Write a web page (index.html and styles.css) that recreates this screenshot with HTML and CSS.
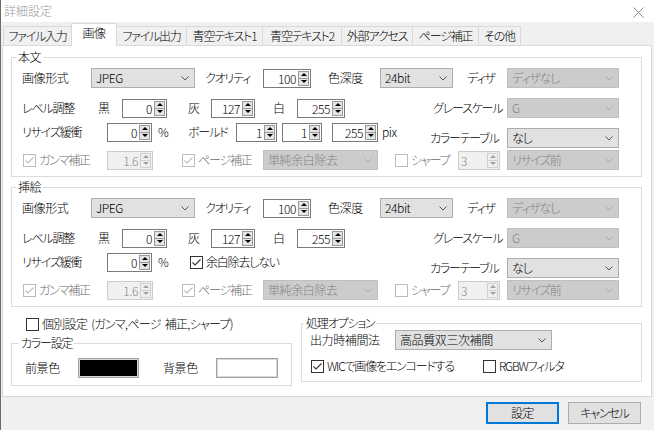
FILE: index.html
```html
<!DOCTYPE html>
<html lang="ja">
<head>
<meta charset="utf-8">
<title>詳細設定</title>
<link rel="stylesheet" href="styles.css">
</head>
<body>
<div class="window">
  <div class="titlebar">
    <span class="title">詳細設定</span>
    <svg class="close" width="11" height="11" viewBox="0 0 11 11"><path d="M0.5 0.5 L10.5 10.5 M10.5 0.5 L0.5 10.5"/></svg>
  </div>
  <div class="tabs">
    <div class="tab w68 k">ファイル入力</div>
    <div class="tab active">画像</div>
    <div class="tab w70 k">ファイル出力</div>
    <div class="tab w76 k">青空テキスト1</div>
    <div class="tab w79 k">青空テキスト2</div>
    <div class="tab w71 k">外部アクセス</div>
    <div class="tab w66 k">ページ補正</div>
    <div class="tab last k">その他</div>
  </div>
  <div class="panel">
    <div class="group main">
      <div class="gtitle">本文</div>
      <div class="row row1">
        <span class="lbl w69">画像形式</span>
        <div class="dd w104"><span>JPEG</span><svg class="chev" viewBox="0 0 8 5"><path d="M0.5 0.5 L4 4 L7.5 0.5"/></svg></div>
        <span class="lbl ml10 w58 k">クオリティ</span>
        <div class="spin w48"><span class="num">100</span><span class="arr"><i class="up"></i><i class="dn"></i></span></div>
        <span class="lbl ml17 w52">色深度</span>
        <div class="dd w73"><span>24bit</span><svg class="chev" viewBox="0 0 8 5"><path d="M0.5 0.5 L4 4 L7.5 0.5"/></svg></div>
        <span class="lbl ml14 w40 k">ディザ</span>
        <div class="dd off w112"><span class="k">ディザなし</span><svg class="chev" viewBox="0 0 8 5"><path d="M0.5 0.5 L4 4 L7.5 0.5"/></svg></div>
      </div>
      <div class="row row2">
        <span class="lbl w76 k">レベル調整</span>
        <span class="lbl w24">黒</span>
        <div class="spin w45"><span class="num">0</span><span class="arr"><i class="up"></i><i class="dn"></i></span></div>
        <span class="lbl ml21 w23">灰</span>
        <div class="spin w44"><span class="num">127</span><span class="arr"><i class="up"></i><i class="dn"></i></span></div>
        <span class="lbl ml18 w24">白</span>
        <div class="spin w48"><span class="num">255</span><span class="arr"><i class="up"></i><i class="dn"></i></span></div>
        <span class="lbl ml88 w74 k">グレースケール</span>
        <div class="dd off w112"><span>G</span><svg class="chev" viewBox="0 0 8 5"><path d="M0.5 0.5 L4 4 L7.5 0.5"/></svg></div>
      </div>
      <div class="row row3">
        <span class="lbl w85 k">リサイズ緩衝</span>
        <div class="spin w45"><span class="num">0</span><span class="arr"><i class="up"></i><i class="dn"></i></span></div>
        <span class="lbl ml6 w30">%</span>
        <span class="lbl w48 k">ボールド</span>
        <div class="spin w41"><span class="num">1</span><span class="arr"><i class="up"></i><i class="dn"></i></span></div>
        <div class="spin ml5 w40"><span class="num">1</span><span class="arr"><i class="up"></i><i class="dn"></i></span></div>
        <div class="spin ml10 w46"><span class="num">255</span><span class="arr"><i class="up"></i><i class="dn"></i></span></div>
        <span class="lbl ml4 w48">pix</span>
        <span class="lbl w77 drop k">カラーテーブル</span>
        <div class="dd w112 drop"><span class="k">なし</span><svg class="chev" viewBox="0 0 8 5"><path d="M0.5 0.5 L4 4 L7.5 0.5"/></svg></div>
      </div>
      <div class="row row4">
        <span class="chk dis ml1 w84"><svg class="box" viewBox="0 0 13 13"><rect x="0.5" y="0.5" width="12" height="12"/><path d="M2.5 6.5 L5 9 L10.5 3.5"/></svg><span class="k">ガンマ補正</span></span>
        <div class="spin off w46"><span class="num">1.6</span><span class="arr"><i class="up"></i><i class="dn"></i></span></div>
        <span class="chk dis ml29 w81"><svg class="box" viewBox="0 0 13 13"><rect x="0.5" y="0.5" width="12" height="12"/><path d="M2.5 6.5 L5 9 L10.5 3.5"/></svg><span class="k">ページ補正</span></span>
        <div class="dd off w115"><span>単純余白除去</span><svg class="chev" viewBox="0 0 8 5"><path d="M0.5 0.5 L4 4 L7.5 0.5"/></svg></div>
        <span class="chk dis ml17 w63"><svg class="box" viewBox="0 0 13 13"><rect x="0.5" y="0.5" width="12" height="12"/></svg><span class="k">シャープ</span></span>
        <div class="spin off w42 left"><span class="num">3</span><span class="arr"><i class="up"></i><i class="dn"></i></span></div>
        <div class="dd off ml7 w112"><span class="k">リサイズ前</span><svg class="chev" viewBox="0 0 8 5"><path d="M0.5 0.5 L4 4 L7.5 0.5"/></svg></div>
      </div>
    </div>

    <div class="group main second">
      <div class="gtitle">挿絵</div>
      <div class="row row1">
        <span class="lbl w69">画像形式</span>
        <div class="dd w104"><span>JPEG</span><svg class="chev" viewBox="0 0 8 5"><path d="M0.5 0.5 L4 4 L7.5 0.5"/></svg></div>
        <span class="lbl ml10 w58 k">クオリティ</span>
        <div class="spin w48"><span class="num">100</span><span class="arr"><i class="up"></i><i class="dn"></i></span></div>
        <span class="lbl ml17 w52">色深度</span>
        <div class="dd w73"><span>24bit</span><svg class="chev" viewBox="0 0 8 5"><path d="M0.5 0.5 L4 4 L7.5 0.5"/></svg></div>
        <span class="lbl ml14 w40 k">ディザ</span>
        <div class="dd off w112"><span class="k">ディザなし</span><svg class="chev" viewBox="0 0 8 5"><path d="M0.5 0.5 L4 4 L7.5 0.5"/></svg></div>
      </div>
      <div class="row row2">
        <span class="lbl w76 k">レベル調整</span>
        <span class="lbl w24">黒</span>
        <div class="spin w45"><span class="num">0</span><span class="arr"><i class="up"></i><i class="dn"></i></span></div>
        <span class="lbl ml21 w23">灰</span>
        <div class="spin w44"><span class="num">127</span><span class="arr"><i class="up"></i><i class="dn"></i></span></div>
        <span class="lbl ml18 w24">白</span>
        <div class="spin w48"><span class="num">255</span><span class="arr"><i class="up"></i><i class="dn"></i></span></div>
        <span class="lbl ml88 w74 k">グレースケール</span>
        <div class="dd off w112"><span>G</span><svg class="chev" viewBox="0 0 8 5"><path d="M0.5 0.5 L4 4 L7.5 0.5"/></svg></div>
      </div>
      <div class="row row3">
        <span class="lbl w85 k">リサイズ緩衝</span>
        <div class="spin w45"><span class="num">0</span><span class="arr"><i class="up"></i><i class="dn"></i></span></div>
        <span class="lbl ml6 w32">%</span>
        <span class="chk w240"><svg class="box" viewBox="0 0 13 13"><rect x="0.5" y="0.5" width="12" height="12"/><path d="M2.5 6.5 L5 9 L10.5 3.5"/></svg><span class="k">余白除去しない</span></span>
        <span class="lbl w77 drop k">カラーテーブル</span>
        <div class="dd w112 drop"><span class="k">なし</span><svg class="chev" viewBox="0 0 8 5"><path d="M0.5 0.5 L4 4 L7.5 0.5"/></svg></div>
      </div>
      <div class="row row4">
        <span class="chk dis ml1 w84"><svg class="box" viewBox="0 0 13 13"><rect x="0.5" y="0.5" width="12" height="12"/><path d="M2.5 6.5 L5 9 L10.5 3.5"/></svg><span class="k">ガンマ補正</span></span>
        <div class="spin off w46"><span class="num">1.6</span><span class="arr"><i class="up"></i><i class="dn"></i></span></div>
        <span class="chk dis ml29 w81"><svg class="box" viewBox="0 0 13 13"><rect x="0.5" y="0.5" width="12" height="12"/><path d="M2.5 6.5 L5 9 L10.5 3.5"/></svg><span class="k">ページ補正</span></span>
        <div class="dd off w115"><span>単純余白除去</span><svg class="chev" viewBox="0 0 8 5"><path d="M0.5 0.5 L4 4 L7.5 0.5"/></svg></div>
        <span class="chk dis ml17 w63"><svg class="box" viewBox="0 0 13 13"><rect x="0.5" y="0.5" width="12" height="12"/></svg><span class="k">シャープ</span></span>
        <div class="spin off w42 left"><span class="num">3</span><span class="arr"><i class="up"></i><i class="dn"></i></span></div>
        <div class="dd off ml7 w112"><span class="k">リサイズ前</span><svg class="chev" viewBox="0 0 8 5"><path d="M0.5 0.5 L4 4 L7.5 0.5"/></svg></div>
      </div>
    </div>

    <div class="bottom">
      <div class="leftcol">
        <span class="chk indiv"><svg class="box" viewBox="0 0 13 13"><rect x="0.5" y="0.5" width="12" height="12"/></svg><span class="mid">個別設定 (ガンマ,ページ 補正,シャープ)</span></span>
        <div class="group colors">
          <div class="gtitle k">カラー設定</div>
          <div class="row swrow">
            <span class="lbl w53">前景色</span>
            <div class="swatch w61"><i class="black"></i></div>
            <span class="lbl ml24 w53">背景色</span>
            <div class="swatch w62"><i class="white"></i></div>
          </div>
        </div>
      </div>
      <div class="group opts">
        <div class="gtitle k">処理オプション</div>
        <div class="row">
          <span class="lbl w85">出力時補間法</span>
          <div class="dd w157"><span>高品質双三次補間</span><svg class="chev" viewBox="0 0 8 5"><path d="M0.5 0.5 L4 4 L7.5 0.5"/></svg></div>
        </div>
        <div class="row chkrow">
          <span class="chk ml1 w172"><svg class="box" viewBox="0 0 13 13"><rect x="0.5" y="0.5" width="12" height="12"/><path d="M2.5 6.5 L5 9 L10.5 3.5"/></svg><span class="k">WICで画像をエンコードする</span></span>
          <span class="chk"><svg class="box" viewBox="0 0 13 13"><rect x="0.5" y="0.5" width="12" height="12"/></svg><span class="k">RGBWフィルタ</span></span>
        </div>
      </div>
    </div>
  </div>
  <div class="footer">
    <div class="btn def">設定</div>
    <div class="btn k">キャンセル</div>
  </div>
</div>
</body>
</html>
```

FILE: styles.css
```css
* { box-sizing: border-box; }
html, body { margin: 0; padding: 0; }
body {
  width: 654px;
  height: 430px;
  overflow: hidden;
  font-family: "Noto Sans CJK JP", "Noto Sans", sans-serif;
  font-size: 12px;
  font-weight: 300;
  line-height: 14px;
  letter-spacing: -0.4px;
  font-feature-settings: "palt";
  color: #000;
  background: #f0f0f0;
}
.k { letter-spacing: -1.2px; }
.mid { letter-spacing: -0.7px; word-spacing: 2px; }
.window {
  width: 654px;
  height: 430px;
  border-left: 1px solid #6b6b6b;
  background: #f0f0f0;
  display: flex;
  flex-direction: column;
}
.titlebar {
  height: 22px;
  flex: none;
  background: #fff;
  display: flex;
  align-items: center;
  justify-content: space-between;
  padding: 0 10px 0 3px;
}
.title { color: #999; letter-spacing: 0; }
.close { margin-top: 2px; }
.close path { stroke: #8c8c8c; stroke-width: 1; fill: none; }

.tabs {
  height: 23px;
  flex: none;
  display: flex;
  align-items: flex-end;
  padding-left: 2px;
}
.tab {
  height: 19px;
  border: 1px solid #d9d9d9;
  border-right: 0;
  border-bottom: 0;
  background: #f0f0f0;
  display: flex;
  align-items: center;
  justify-content: center;
  padding-bottom: 1px;
  flex: none;
  white-space: nowrap;
}
.tab.active {
  width: 46px;
  height: 23px;
  margin-bottom: -1px;
  margin-right: -1px;
  border-right: 1px solid #d9d9d9;
  background: #fff;
  position: relative;
  z-index: 1;
  padding-bottom: 4px;
}
.tab.last { width: 43px; border-right: 1px solid #d9d9d9; }

.panel {
  margin-left: 1px;
  width: 650px;
  height: 352px;
  flex: none;
  border: 1px solid #d9d9d9;
  background: #fff;
  padding: 11px 0 0 8px;
}
.group {
  border: 1px solid #dcdcdc;
  background: #fff;
}
.group.main {
  width: 631px;
  padding: 0 0 6px 10px;
}
.group.second { margin-top: 10px; }
.gtitle {
  width: fit-content;
  margin: -8px 0 0 -6px;
  padding: 0 2px;
  background: #fff;
  line-height: 14px;
  white-space: nowrap;
}
.row {
  display: flex;
  align-items: center;
  height: 20px;
  white-space: nowrap;
}
.row1 { margin-top: 4px; }
.row2 { margin-top: 10px; }
.row3 { margin-top: 4px; }
.row4 { margin-top: 8px; }
.drop { margin-top: 12px; }

.lbl { flex: none; }

.dd {
  flex: none;
  height: 20px;
  border: 1px solid #adadad;
  background: #e1e1e1;
  display: flex;
  align-items: center;
  justify-content: space-between;
  padding: 0 5px 0 4px;
  overflow: hidden;
}
.dd .chev { width: 8px; height: 5px; flex: none; }
.dd .chev path { fill: none; stroke: #555; stroke-width: 1; }
.dd.off { background: #ccc; border-color: #bfbfbf; color: #838383; }
.dd.off .chev path { stroke: #a9a9a9; }

.spin {
  flex: none;
  height: 19px;
  border: 1px solid #7a7a7a;
  background: #fff;
  display: flex;
  padding: 1px;
}
.spin .num {
  flex: 1;
  text-align: right;
  padding-right: 2px;
  line-height: 15px;
}
.spin.left .num { text-align: left; padding-left: 1px; }
.arr {
  width: 11px;
  flex: none;
  display: flex;
  flex-direction: column;
}
.arr i {
  flex: 1;
  display: flex;
  align-items: center;
  justify-content: center;
  background: #e5e5e5;
  border: 1px solid #9a9a9a;
}
.arr i.dn { border-top: 0; }
.arr i::after {
  content: "";
  width: 0;
  height: 0;
  border-left: 3px solid transparent;
  border-right: 3px solid transparent;
}
.arr i.up::after { border-bottom: 3px solid #000; }
.arr i.dn::after { border-top: 3px solid #000; }
.spin.off { border-color: #ccc; background: #f0f0f0; color: #838383; }
.spin.off .arr i { border-color: #d0d0d0; background: #f0f0f0; }
.spin.off .arr i.up::after { border-bottom-color: #a0a0a0; }
.spin.off .arr i.dn::after { border-top-color: #a0a0a0; }

.chk {
  flex: none;
  display: flex;
  align-items: center;
  gap: 3px;
  white-space: nowrap;
}
.chk .box { width: 13px; height: 13px; flex: none; }
.chk .box rect { fill: #fff; stroke: #333; stroke-width: 1; }
.chk .box path { fill: none; stroke: #333; stroke-width: 1.1; }
.chk.dis { color: #6d6d6d; }
.chk.dis .box rect { stroke: #bcbcbc; }
.chk.dis .box path { stroke: #bcbcbc; }

.bottom {
  display: flex;
  align-items: flex-start;
  margin-top: 9px;
}
.leftcol { width: 281px; flex: none; }
.indiv { margin: 1px 0 0 15px; }
.group.colors {
  margin-top: 12px;
  padding: 0 0 7px 13px;
}
.swrow { margin-top: 8px; }
.swatch {
  flex: none;
  height: 20px;
  border: 1px solid #a0a0a0;
  padding: 1px;
  background: #dadada;
}
.swatch i { display: block; height: 100%; }
.swatch .black { background: #000; }
.swatch .white { background: #fff; }
.group.opts {
  width: 341px;
  flex: none;
  margin: 7px 0 0 9px;
  padding: 0 0 8px 8px;
}
.group.opts .row:first-of-type { margin-top: 4px; }
.chkrow { margin-top: 9px; height: 14px; }

.footer {
  display: flex;
  justify-content: flex-end;
  gap: 9px;
  padding-right: 13px;
  margin-top: 5px;
}
.btn {
  width: 73px;
  height: 22px;
  border: 1px solid #adadad;
  background: #e1e1e1;
  display: flex;
  align-items: center;
  justify-content: center;
}
.btn.def { border: 2px solid #0078d7; }

.ml1 { margin-left: 1px; }
.ml4 { margin-left: 4px; }
.ml5 { margin-left: 5px; }
.ml6 { margin-left: 6px; }
.ml7 { margin-left: 7px; }
.ml10 { margin-left: 10px; }
.ml14 { margin-left: 14px; }
.ml17 { margin-left: 17px; }
.ml18 { margin-left: 18px; }
.ml21 { margin-left: 21px; }
.ml24 { margin-left: 24px; }
.ml29 { margin-left: 29px; }
.ml88 { margin-left: 88px; }

.w23 { width: 23px; }
.w24 { width: 24px; }
.w30 { width: 30px; }
.w32 { width: 32px; }
.w40 { width: 40px; }
.w41 { width: 41px; }
.w42 { width: 42px; }
.w44 { width: 44px; }
.w45 { width: 45px; }
.w46 { width: 46px; }
.w48 { width: 48px; }
.w52 { width: 52px; }
.w53 { width: 53px; }
.w58 { width: 58px; }
.w61 { width: 61px; }
.w62 { width: 62px; }
.w63 { width: 63px; }
.w66 { width: 66px; }
.w68 { width: 68px; }
.w69 { width: 69px; }
.w70 { width: 70px; }
.w71 { width: 71px; }
.w73 { width: 73px; }
.w74 { width: 74px; }
.w76 { width: 76px; }
.w77 { width: 77px; }
.w79 { width: 79px; }
.w81 { width: 81px; }
.w84 { width: 84px; }
.w85 { width: 85px; }
.w104 { width: 104px; }
.w112 { width: 112px; }
.w115 { width: 115px; }
.w157 { width: 157px; }
.w172 { width: 172px; }
.w240 { width: 240px; }
```
